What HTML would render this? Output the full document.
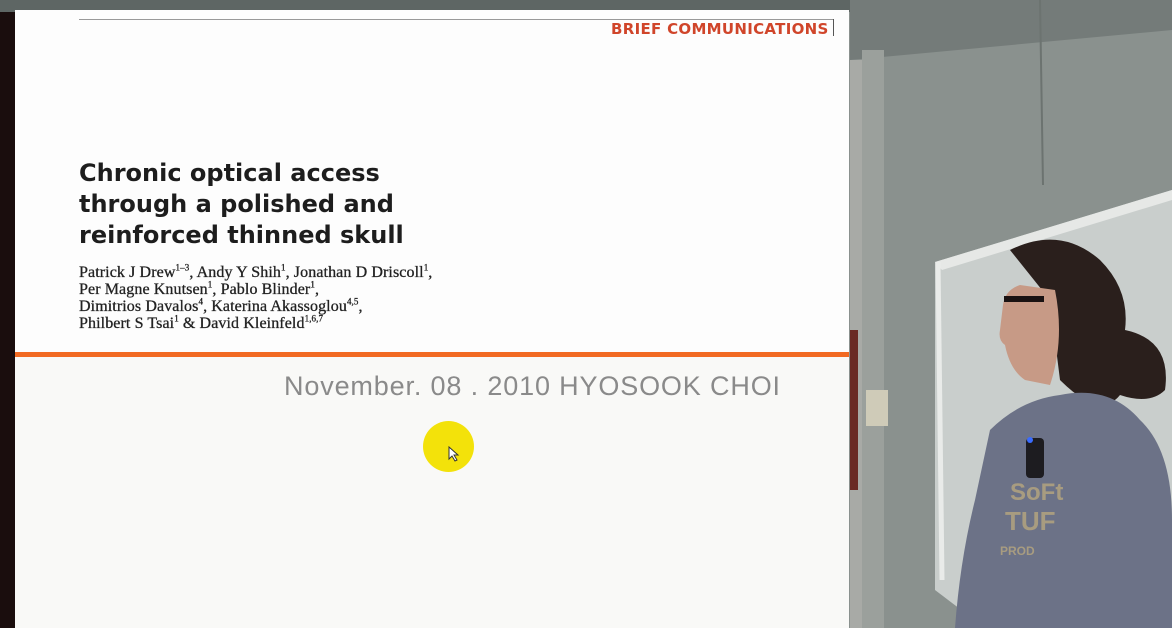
<!DOCTYPE html>
<html><head><meta charset="utf-8"><style>
html,body{margin:0;padding:0;width:1172px;height:628px;overflow:hidden;background:#7f8784;}
.slide{position:absolute;left:15px;top:10px;width:834px;height:618px;background:#fdfdfd;}
.t{position:absolute;font-family:"DejaVu Sans","Liberation Sans",sans-serif;}
sup{font-size:9px;line-height:0}
</style></head><body>
<svg width="1172" height="628" style="position:absolute;left:0;top:0">
<rect x="0" y="0" width="1172" height="628" fill="#8a918e"/>
<rect x="0" y="0" width="850" height="12" fill="#5e6664"/>
<rect x="0" y="12" width="16" height="616" fill="#1a0d0d"/>
<polygon points="850,0 1172,0 1172,30 850,60" fill="#747b79"/>
<rect x="850" y="60" width="12" height="568" fill="#a8aaa6"/>
<rect x="850" y="330" width="8" height="160" fill="#6a2a24"/>
<rect x="862" y="50" width="22" height="578" fill="#9ba09c"/>
<line x1="1040" y1="0" x2="1043" y2="185" stroke="#6c7370" stroke-width="2"/>
<polygon points="935,262 1172,190 1172,628 985,628 935,590" fill="#c9cecc"/>
<polygon points="935,262 1172,190 1172,200 942,270" fill="#e6e8e6"/>
<line x1="938" y1="262" x2="942" y2="580" stroke="#e9ebe9" stroke-width="5"/>
<rect x="866" y="390" width="22" height="36" fill="#cfcbb8"/>
<path d="M1010,250 Q1060,225 1100,260 Q1130,290 1125,330 Q1172,340 1165,390 Q1150,405 1120,395 Q1100,420 1060,380 L1050,300 Z" fill="#2a1f1c"/>
<path d="M1003,305 Q1005,290 1020,285 L1055,290 Q1065,340 1050,385 L1025,380 Q1010,370 1005,345 Q998,340 1000,330 Z" fill="#c79a86"/>
<rect x="1004" y="296" width="40" height="6" fill="#1a1212"/>
<path d="M990,430 Q1020,400 1060,395 Q1110,385 1140,420 Q1172,450 1172,520 L1172,628 L955,628 Q960,560 975,500 Z" fill="#6c7287"/>
<rect x="1026" y="438" width="18" height="40" rx="4" fill="#1d1c20"/>
<circle cx="1030" cy="440" r="3" fill="#3a6cff"/>
<text x="1010" y="500" font-family="Liberation Sans" font-weight="bold" font-size="24" fill="#a89c80">SoFt</text>
<text x="1005" y="530" font-family="Liberation Sans" font-weight="bold" font-size="26" fill="#a89c80">TUF</text>
<text x="1000" y="555" font-family="Liberation Sans" font-weight="bold" font-size="12" fill="#a89c80">PROD</text>
</svg>
<div class="slide">
<div style="position:absolute;left:64px;top:9px;width:755px;height:1px;background:#999"></div>
<div style="position:absolute;left:818px;top:9px;width:1px;height:17px;background:#555"></div>
<div class="t" style="left:596px;top:10px;font-size:15px;font-weight:bold;color:#d0452a;letter-spacing:0.3px">BRIEF COMMUNICATIONS</div>
<div class="t" style="left:64px;top:148px;font-size:24px;font-weight:bold;line-height:31px;color:#1d1d1d">Chronic optical access<br>through a polished and<br>reinforced thinned skull</div>
<div style="position:absolute;left:64px;top:254px;font-family:'Liberation Serif',serif;font-size:16px;line-height:17px;color:#222;-webkit-text-stroke:0.3px #222;letter-spacing:0.1px">Patrick J Drew<sup>1–3</sup>, Andy Y Shih<sup>1</sup>, Jonathan D Driscoll<sup>1</sup>,<br>Per Magne Knutsen<sup>1</sup>, Pablo Blinder<sup>1</sup>,<br>Dimitrios Davalos<sup>4</sup>, Katerina Akassoglou<sup>4,5</sup>,<br>Philbert S Tsai<sup>1</sup> &amp; David Kleinfeld<sup>1,6,7</sup></div>
<div style="position:absolute;left:0;top:342px;width:834px;height:5px;background:#f26a22"></div>
<div style="position:absolute;left:0;top:347px;width:834px;height:271px;background:#f9f9f7"></div>
<div class="t" style="left:269px;top:361px;font-family:'Liberation Sans',sans-serif;font-size:27px;letter-spacing:0.85px;color:#8a8a8a;white-space:nowrap">November. 08 . 2010 HYOSOOK CHOI</div>
<div style="position:absolute;left:408px;top:411px;width:51px;height:51px;border-radius:50%;background:#f3e20a"></div>
<svg style="position:absolute;left:433px;top:436px" width="12" height="16"><path d="M1,1 L1,13 L4,10 L7,15 L9,14 L6,9 L10,9 Z" fill="#fff" stroke="#333" stroke-width="1"/></svg>
</div>
</body></html>
